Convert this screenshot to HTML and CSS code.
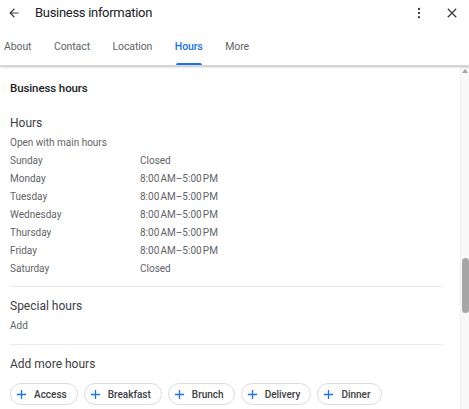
FILE: index.html
```html
<!DOCTYPE html>
<html lang="en">
<head>
<meta charset="utf-8">
<title>Business information</title>
<link rel="stylesheet" href="styles.css">
</head>
<body>
<div class="app">
  <header class="topbar">
    <button class="icon-btn back" aria-label="Back">
      <svg width="14" height="14" viewBox="0 0 24 24"><path d="M20 11H7.83l5.59-5.59L12 4l-8 8 8 8 1.41-1.41L7.83 13H20v-2z" fill="#3c4043"/></svg>
    </button>
    <h1 class="title">Business information</h1>
    <div class="spacer"></div>
    <button class="icon-btn more" aria-label="More options">
      <svg width="14" height="14" viewBox="0 0 24 24"><circle cx="12" cy="5" r="2" fill="#3c4043"/><circle cx="12" cy="12" r="2" fill="#3c4043"/><circle cx="12" cy="19" r="2" fill="#3c4043"/></svg>
    </button>
    <button class="icon-btn close" aria-label="Close">
      <svg width="16" height="16" viewBox="0 0 24 24"><path d="M19 6.41L17.59 5 12 10.59 6.41 5 5 6.41 10.59 12 5 17.59 6.41 19 12 13.41 17.59 19 19 17.59 13.41 12z" fill="#3c4043"/></svg>
    </button>
  </header>
  <nav class="tabs">
    <a class="tab">About</a>
    <a class="tab">Contact</a>
    <a class="tab">Location</a>
    <a class="tab active">Hours</a>
    <a class="tab">More</a>
  </nav>
  <main class="content">
    <h2 class="section-title">Business hours</h2>
    <section class="block">
      <h3 class="block-title">Hours</h3>
      <p class="sub">Open with main hours</p>
      <div class="hours">
        <div class="row"><span class="day">Sunday</span><span class="time">Closed</span></div>
        <div class="row"><span class="day">Monday</span><span class="time">8:00&#8239;AM–5:00&#8239;PM</span></div>
        <div class="row"><span class="day">Tuesday</span><span class="time">8:00&#8239;AM–5:00&#8239;PM</span></div>
        <div class="row"><span class="day">Wednesday</span><span class="time">8:00&#8239;AM–5:00&#8239;PM</span></div>
        <div class="row"><span class="day">Thursday</span><span class="time">8:00&#8239;AM–5:00&#8239;PM</span></div>
        <div class="row"><span class="day">Friday</span><span class="time">8:00&#8239;AM–5:00&#8239;PM</span></div>
        <div class="row"><span class="day">Saturday</span><span class="time">Closed</span></div>
      </div>
    </section>
    <section class="block bordered special">
      <h3 class="block-title">Special hours</h3>
      <p class="sub">Add</p>
    </section>
    <section class="block bordered more-hours">
      <h3 class="block-title">Add more hours</h3>
      <div class="chips">
        <button class="chip"><svg class="plus" width="11" height="11" viewBox="0 0 12 12"><path d="M6 1v10M1 6h10" stroke="#1a73e8" stroke-width="1.4"/></svg>Access</button>
        <button class="chip"><svg class="plus" width="11" height="11" viewBox="0 0 12 12"><path d="M6 1v10M1 6h10" stroke="#1a73e8" stroke-width="1.4"/></svg>Breakfast</button>
        <button class="chip"><svg class="plus" width="11" height="11" viewBox="0 0 12 12"><path d="M6 1v10M1 6h10" stroke="#1a73e8" stroke-width="1.4"/></svg>Brunch</button>
        <button class="chip"><svg class="plus" width="11" height="11" viewBox="0 0 12 12"><path d="M6 1v10M1 6h10" stroke="#1a73e8" stroke-width="1.4"/></svg>Delivery</button>
        <button class="chip"><svg class="plus" width="11" height="11" viewBox="0 0 12 12"><path d="M6 1v10M1 6h10" stroke="#1a73e8" stroke-width="1.4"/></svg>Dinner</button>
      </div>
    </section>
    <div class="scrollbar">
      <div class="arrow-up"></div>
      <div class="thumb"></div>
    </div>
  </main>
</div>
</body>
</html>
```
FILE: styles.css
```css
* { box-sizing: border-box; }
html, body { margin: 0; padding: 0; background: #fff; }
body {
  font-family: Roboto, "Liberation Sans", Arial, sans-serif;
  color: #3c4043;
  width: 469px;
  height: 409px;
  overflow: hidden;
}
.app { display: flex; flex-direction: column; height: 409px; }
.topbar {
  display: flex;
  align-items: center;
  height: 25px;
  padding: 0 9px 0 6px;
}
.icon-btn {
  border: 0;
  background: none;
  padding: 0;
  width: 16px;
  height: 16px;
  display: flex;
  align-items: center;
  justify-content: center;
  cursor: pointer;
}
.back { margin-right: 13px; }
.title {
  margin: 0;
  font-size: 13px;
  font-weight: 400;
  color: #202124;
  letter-spacing: -0.3px;
}
.spacer { flex: 1; }
.more { margin-right: 17px; }
.tabs {
  display: flex;
  height: 41px;
  align-items: stretch;
  padding-left: 4px;
  padding-top: 3px;
  box-shadow: 0 1px 2px rgba(0,0,0,0.25);
  border-bottom: 1px solid #d6d6d6;
  position: relative;
  z-index: 1;
}
.tab {
  font-size: 10.5px;
  color: #5f6368;
  display: flex;
  align-items: center;
  margin-right: 22.5px;
  position: relative;
  letter-spacing: -0.1px;
}
.tab.active { color: #1a73e8; font-weight: 500; }
.tab.active::after {
  content: "";
  position: absolute;
  left: 1px;
  right: 1px;
  bottom: 0;
  height: 2px;
  background: #1a73e8;
  border-radius: 2px 2px 0 0;
}
.content {
  flex: 1;
  position: relative;
  padding: 14px 27px 0 10px;
  overflow: hidden;
}
.section-title {
  margin: 0 0 19px;
  font-size: 11.5px;
  font-weight: 500;
  color: #202124;
  line-height: 16px;
  letter-spacing: -0.1px;
}
.block-title {
  margin: 0;
  font-size: 12px;
  font-weight: 400;
  color: #3c4043;
  line-height: 16px;
}
.sub {
  margin: 5px 0 0;
  font-size: 10px;
  color: #5f6368;
  line-height: 14px;
}
.hours { margin-top: 1px; }
.row {
  display: grid;
  grid-template-columns: 130px 1fr;
  height: 18px;
  align-items: center;
  font-size: 10px;
  color: #5f6368;
}
.block { padding-bottom: 9px; }
.bordered {
  border-top: 1px solid #e8eaed;
  padding-top: 11px;
}
.special { padding-bottom: 11px; }
.more-hours { padding-top: 11px; }
.chips {
  display: flex;
  gap: 6px;
  margin-top: 11px;
}
.chip {
  display: flex;
  align-items: center;
  height: 22px;
  border: 1px solid #dadce0;
  border-radius: 11px;
  background: #fff;
  padding: 0 10px 0 5px;
  font-family: Roboto, "Liberation Sans", Arial, sans-serif;
  font-size: 10px;
  font-weight: 500;
  color: #3c4043;
  letter-spacing: 0;
}
.plus {
  margin-right: 7px;
  flex: none;
}
.scrollbar {
  position: absolute;
  top: 0;
  right: 0;
  bottom: 0;
  width: 9px;
  background: #f8f8f8;
  border-left: 1px solid #f0f0f0;
}
.arrow-up {
  position: absolute;
  top: 3px;
  left: 1px;
  width: 0;
  height: 0;
  border-left: 3.5px solid transparent;
  border-right: 3.5px solid transparent;
  border-bottom: 4px solid #a3a3a3;
}
.thumb {
  position: absolute;
  top: 192px;
  left: 1px;
  width: 7px;
  height: 55px;
  background: #a6a6a6;
  border-radius: 4px;
}
```
